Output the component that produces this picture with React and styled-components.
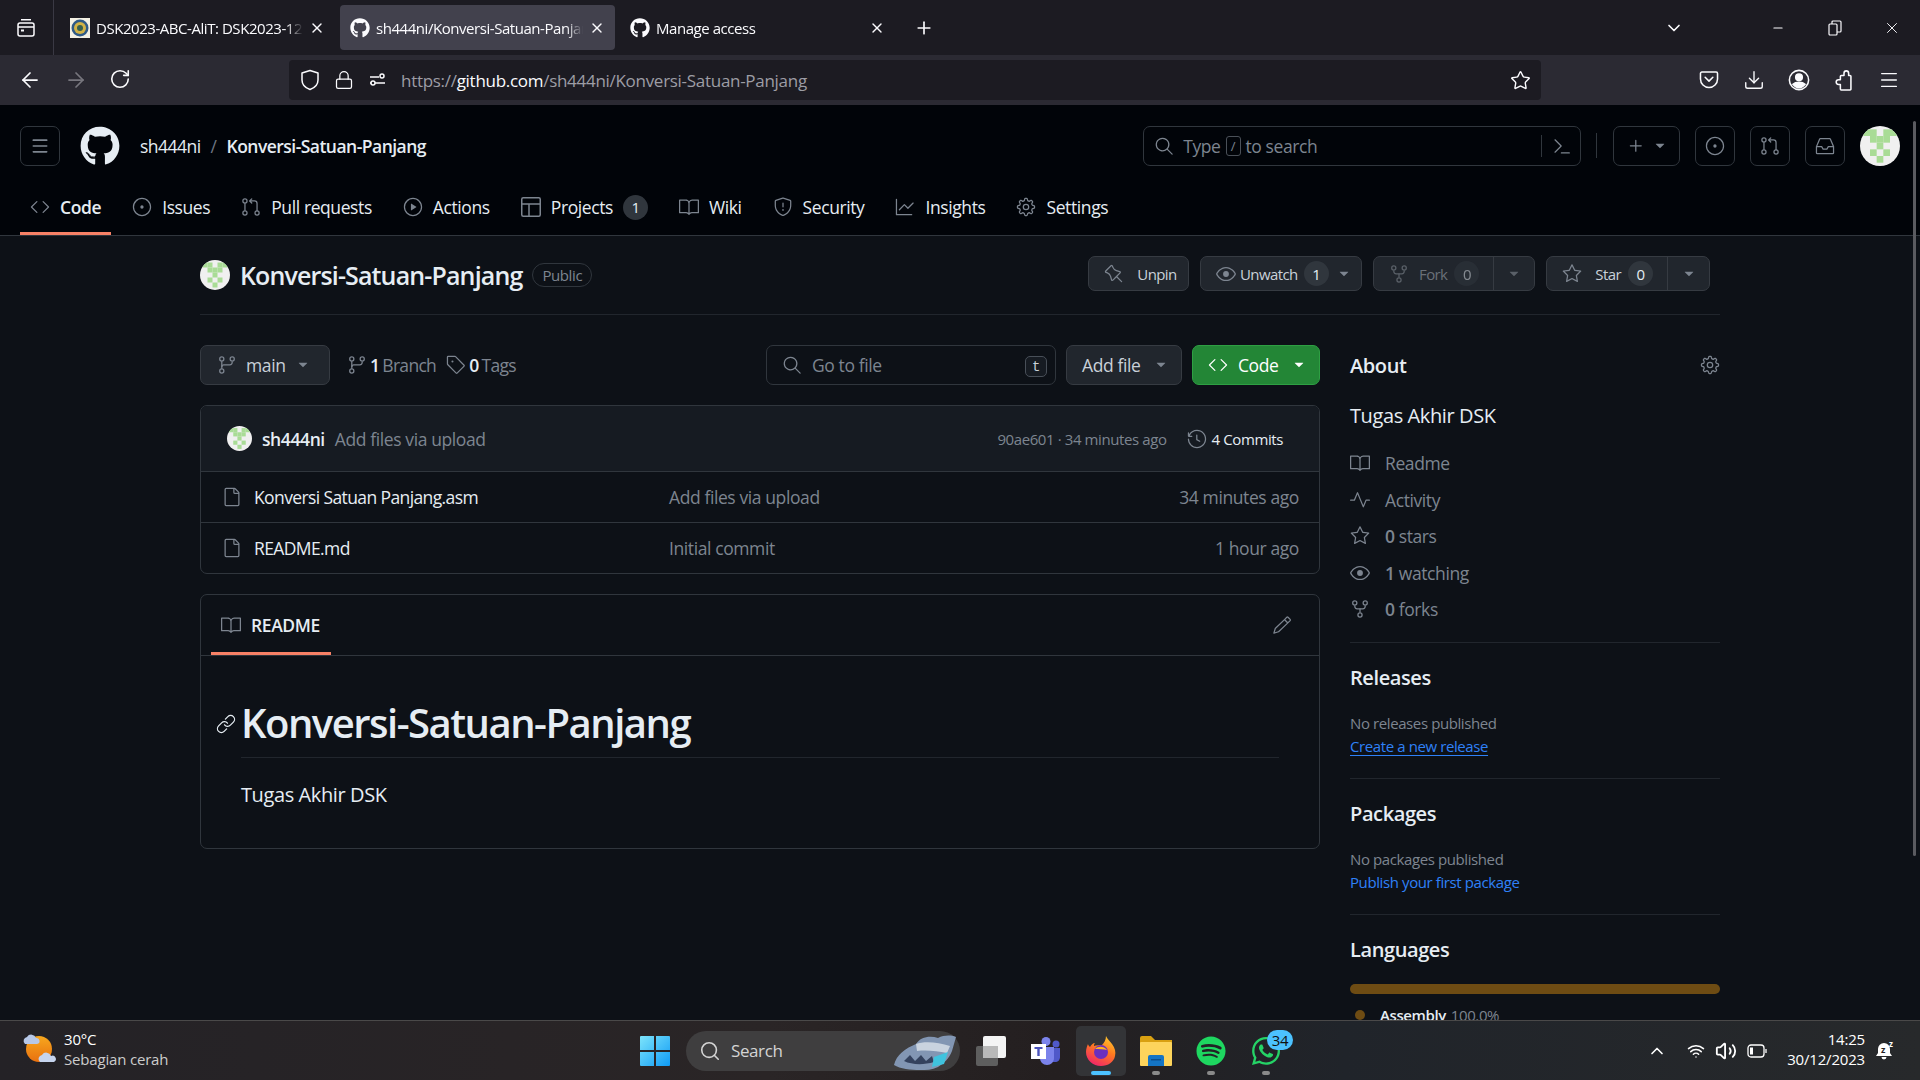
import React from 'react';
import styled, { createGlobalStyle } from 'styled-components';
import {
  GoBook, GoCode, GoCommandPalette, GoEye, GoFile, GoGear, GoGitBranch, GoGitPullRequest, GoGraph,
  GoHistory, GoInbox, GoIssueOpened, GoLink, GoPencil, GoPin, GoPlay, GoPlus, GoPulse,
  GoRepoForked, GoSearch, GoShield, GoStar, GoTag, GoTriangleDown,
} from 'react-icons/go';
import { FaGithub, FaSpotify, FaWhatsapp } from 'react-icons/fa';
import {
  ArrowLeft, ArrowRight, ChevronDown, ChevronUp, Download, Lock, Menu, Minus, Plus, RotateCw,
  Search, Star, Volume2, Wifi, X,
} from 'lucide-react';

const GlobalStyle = createGlobalStyle`
  html, body { margin: 0; padding: 0; background: #0d1117; }
  body { font-family: "Open Sans", "Noto Sans", sans-serif; letter-spacing: -0.025em; }
  * { box-sizing: border-box; }
  svg { flex-shrink: 0; display: block; }
`;

const Page = styled.div`
  position: relative;
  width: 1920px;
  height: 1080px;
  overflow: hidden;
  display: flex;
  flex-direction: column;
  background: #0d1117;
`;

// Browser chrome
const TabBar = styled.div`
  height: 55px;
  background: #1c1b22;
  display: flex;
  align-items: center;
  color: #fbfbfe;
`;

const TabGroups = styled.div`
  width: 54px;
  height: 55px;
  padding-left: 16px;
  margin-right: 6px;
  border-right: 1px solid #3a3944;
  display: flex;
  align-items: center;
`;

const Tab = styled.div`
  width: 275px;
  height: 45px;
  margin-right: 5px;
  border-radius: 4px;
  padding: 0 10px;
  display: flex;
  align-items: center;
  gap: 6px;
  font-size: 15px;
  letter-spacing: -0.03em;
  background: ${(p) => (p.$active ? '#42414d' : 'transparent')};
`;

const TabTitle = styled.span`
  flex: 1;
  min-width: 0;
  white-space: nowrap;
  overflow: hidden;
  mask-image: linear-gradient(to right, #000 92%, transparent);
`;

const Favicon = styled.div`
  width: 20px;
  height: 20px;
  display: flex;
  align-items: center;
  justify-content: center;
`;

const NewTab = styled.div`
  margin-left: 14px;
  width: 20px;
`;

const TabBarRight = styled.div`
  margin-left: auto;
  display: flex;
  align-items: center;
`;

const ListTabs = styled.div`
  margin-right: 65px;
`;

const WinBtn = styled.div`
  width: 57px;
  display: flex;
  justify-content: center;
`;

const Toolbar = styled.div`
  height: 50px;
  background: #2b2a33;
  display: flex;
  align-items: center;
  color: #fbfbfe;
  padding-left: 18px;
`;

const NavBtns = styled.div`
  display: flex;
  gap: 21.5px;
  width: 271px;
`;

const UrlBar = styled.div`
  width: 1252px;
  height: 40px;
  background: #1c1b22;
  border-radius: 4px;
  padding: 0 10px 0 11px;
  display: flex;
  align-items: center;
  gap: 14px;
`;

const UrlText = styled.div`
  flex: 1;
  font-size: 17px;
  color: #9d9da5;
  letter-spacing: -0.017em;
  margin: 1px 0 0 -1px;
  b { font-weight: 400; color: #fbfbfe; }
`;

const ToolIcons = styled.div`
  display: flex;
  align-items: center;
  gap: 23px;
  margin-left: 157px;
  svg { width: 22px; height: 22px; }
`;

// GitHub header
const Header = styled.div`
  height: 131px;
  background: #010409;
  border-bottom: 1px solid #30363d;
  display: flex;
  flex-direction: column;
  color: #e6edf3;
`;

const HeaderTop = styled.div`
  height: 81px;
  padding: 21px 20px 0;
  display: flex;
  align-items: flex-start;
`;

const HeadBtn = styled.div`
  width: ${(p) => p.$w || 40}px;
  height: 40px;
  border: 1px solid #30363d;
  border-radius: 7px;
  color: #7d8590;
  display: flex;
  align-items: center;
  justify-content: center;
  gap: 6px;
  margin-left: ${(p) => p.$ml ?? 15}px;
`;

const Logo = styled.div`
  margin: 0 20px;
  height: 40px;
  color: #e6edf3;
`;

const Crumbs = styled.div`
  height: 40px;
  display: flex;
  align-items: center;
  gap: 10px;
  font-size: 17.5px;
  letter-spacing: -0.03em;
  i { font-style: normal; color: #6e7681; }
  b { font-weight: 600; }
`;

const HeadSearch = styled.div`
  margin-left: auto;
  width: 438px;
  height: 40px;
  border: 1px solid #30363d;
  border-radius: 7px;
  color: #7d8590;
  display: flex;
  align-items: center;
  padding-left: 10px;
  font-size: 17.5px;
  gap: 5px;
`;

const SlashKey = styled.span`
  width: 15px;
  height: 20px;
  border: 1px solid #4a5058;
  border-radius: 3px;
  font-size: 13px;
  display: inline-flex;
  align-items: center;
  justify-content: center;
`;

const SearchEnd = styled.div`
  margin-left: auto;
  width: 39px;
  height: 22px;
  border-left: 1px solid #30363d;
  padding-left: 10px;
  display: flex;
  align-items: center;
`;

const HeadDivider = styled.div`
  width: 1px;
  height: 25px;
  margin: 7px 0 0 15px;
  background: #30363d;
`;

const HeaderAvatar = styled.div`
  margin-left: 15px;
`;

const NavRow = styled.div`
  height: 49px;
  padding: 0 20px;
  display: flex;
  gap: 11px;
  font-size: 17.5px;
`;

const NavItem = styled.div`
  height: 49px;
  padding: 0 10px 4px;
  display: flex;
  align-items: center;
  gap: 10px;
  color: #e6edf3;
  font-weight: ${(p) => (p.$active ? 600 : 400)};
  border-bottom: 3px solid ${(p) => (p.$active ? '#f78166' : 'transparent')};
  svg { color: #7d8590; }
`;

const Counter = styled.span`
  min-width: 25px;
  height: 25px;
  border-radius: 13px;
  background: #30363d;
  color: #e6edf3;
  font-size: 15px;
  font-weight: 500;
  display: flex;
  align-items: center;
  justify-content: center;
  opacity: ${(p) => (p.$dim ? 0.5 : 1)};
`;

// Repository
const Main = styled.div`
  flex: 1;
  min-height: 0;
  overflow: hidden;
  padding: 0 200px;
  color: #e6edf3;
`;

const RepoHead = styled.div`
  height: 79px;
  border-bottom: 1px solid #21262d;
  display: flex;
  align-items: flex-start;
  padding-top: 24px;
`;

const RepoName = styled.div`
  margin-left: 10px;
  font-size: 25px;
  font-weight: 600;
  line-height: 30px;
  letter-spacing: -0.0345em;
`;

const Visibility = styled.span`
  margin: 3px 0 0 10px;
  height: 24px;
  padding: 0 9px;
  border: 1px solid #30363d;
  border-radius: 12px;
  color: #7d8590;
  font-size: 15px;
  font-weight: 500;
  display: flex;
  align-items: center;
`;

const RepoActions = styled.div`
  margin: -4px 10px 0 auto;
  display: flex;
  gap: 11px;
`;

const ActionBtn = styled.div`
  width: ${(p) => p.$w}px;
  height: 35px;
  background: #21262d;
  border: 1px solid #363b42;
  border-radius: 7px;
  display: flex;
  align-items: center;
  font-size: 15px;
  font-weight: 500;
  letter-spacing: -0.04em;
  color: ${(p) => (p.$dim ? '#6a7078' : '#c9d1d9')};
  svg { color: ${(p) => (p.$dim ? '#5a6068' : '#7d8590')}; }
`;

const ActionMain = styled.div`
  flex: 1;
  min-width: 0;
  display: flex;
  align-items: center;
  gap: ${(p) => p.$gap || 7}px;
  padding-left: 15px;
  svg { margin-right: ${(p) => p.$iconGap ?? 3}px; }
`;

const ActionCaret = styled.div`
  width: ${(p) => p.$w}px;
  height: 100%;
  border-left: ${(p) => (p.$split ? '1px solid #363b42' : 'none')};
  display: flex;
  align-items: center;
  justify-content: center;
`;

const Columns = styled.div`
  display: flex;
  gap: 30px;
  padding-top: 30px;
`;

const LeftCol = styled.div`
  width: 1120px;
`;

const BranchRow = styled.div`
  height: 40px;
  display: flex;
  align-items: center;
  font-size: 17.5px;
`;

const BranchBtn = styled.div`
  width: 130px;
  height: 40px;
  background: #21262d;
  border: 1px solid #363b42;
  border-radius: 7px;
  padding-left: 16px;
  display: flex;
  align-items: center;
  gap: 9px;
  font-weight: 500;
  color: #c9d1d9;
  svg { color: #7d8590; }
  span { width: 40px; }
`;

const Meta = styled.div`
  margin-left: ${(p) => p.$ml}px;
  display: flex;
  align-items: center;
  gap: 3px;
  letter-spacing: -0.04em;
  color: #7d8590;
  b { font-weight: 600; color: #e6edf3; }
`;

const GoFileBox = styled.div`
  margin-left: auto;
  width: 290px;
  height: 40px;
  border: 1px solid #30363d;
  border-radius: 7px;
  padding: 0 8px 0 15px;
  display: flex;
  align-items: center;
  gap: 10px;
  color: #7d8590;
`;

const KeyHint = styled.span`
  margin-left: auto;
  margin-top: 3px;
  width: 22px;
  height: 21px;
  border: 1px solid #484f58;
  border-radius: 5px;
  background: #161b22;
  color: #c9d1d9;
  font-size: 14px;
  font-family: "Liberation Mono", monospace;
  display: flex;
  align-items: center;
  justify-content: center;
`;

const RowBtn = styled.div`
  margin-left: 10px;
  width: ${(p) => p.$w}px;
  height: 40px;
  background: ${(p) => (p.$green ? '#238636' : '#21262d')};
  border: 1px solid ${(p) => (p.$green ? '#2ea043' : '#363b42')};
  border-radius: 7px;
  padding-left: 15px;
  color: ${(p) => (p.$green ? '#fff' : '#c9d1d9')};
  font-weight: 500;
  display: flex;
  align-items: center;
  gap: 10px;
  svg:last-child { margin-left: 3px; }
`;

const FileBox = styled.div`
  margin-top: 20px;
  border: 1px solid #30363d;
  border-radius: 7px;
  overflow: hidden;
`;

const CommitHead = styled.div`
  height: 65px;
  background: #161b22;
  padding: 0 36px 0 26px;
  display: flex;
  align-items: center;
  font-size: 17.5px;
`;

const CommitAuthor = styled.b`
  margin-left: 10px;
  font-weight: 600;
`;

const CommitMsg = styled.span`
  margin-left: 10px;
  color: #7d8590;
`;

const CommitMeta = styled.span`
  margin-left: auto;
  font-size: 15px;
  color: #7d8590;
`;

const CommitCount = styled.span`
  margin-left: 20px;
  display: flex;
  align-items: center;
  gap: 5px;
  font-size: 15px;
  font-weight: 500;
  svg { color: #7d8590; }
`;

const FileRow = styled.div`
  height: 51px;
  border-top: 1px solid #30363d;
  padding: 0 20px 0 21px;
  display: flex;
  align-items: center;
  font-size: 17.5px;
  svg { color: #7d8590; }
`;

const FileName = styled.span`
  width: 415px;
  margin-left: 12px;
  letter-spacing: -0.035em;
`;

const FileMsg = styled.span`
  color: #7d8590;
`;

const FileTime = styled.span`
  margin-left: auto;
  color: #7d8590;
`;

const ReadmeBox = styled.div`
  margin-top: 20px;
  height: 255px;
  border: 1px solid #30363d;
  border-radius: 7px;
`;

const ReadmeHead = styled.div`
  height: 61px;
  border-bottom: 1px solid #30363d;
  padding: 0 27px 0 10px;
  display: flex;
  align-items: flex-start;
  justify-content: space-between;
  svg { color: #7d8590; }
`;

const ReadmeTab = styled.div`
  width: 120px;
  height: 60px;
  padding: 3px 0 0 10px;
  border-bottom: 3px solid #f78166;
  display: flex;
  align-items: center;
  gap: 10px;
  font-size: 17.5px;
  font-weight: 600;
`;

const PencilWrap = styled.div`
  margin-top: 20px;
`;

const ReadmeBody = styled.div`
  padding: 30px 40px 0;
`;

const ReadmeTitle = styled.h1`
  position: relative;
  margin: 0;
  height: 72px;
  border-bottom: 1px solid #21262d;
  font-size: 40px;
  font-weight: 600;
  line-height: 74px;
  letter-spacing: -0.0375em;
  svg { position: absolute; left: -25px; top: 28px; color: #e6edf3; }
`;

const ReadmeText = styled.p`
  margin: 22px 0 0;
  font-size: 20px;
  line-height: 30px;
`;

const Side = styled.div`
  width: 370px;
`;

const SideHead = styled.div`
  height: 40px;
  display: flex;
  align-items: center;
  justify-content: space-between;
  font-size: 20px;
  font-weight: 600;
  svg { color: #7d8590; }
`;

const SideDesc = styled.div`
  margin-top: 16px;
  font-size: 20px;
  line-height: 30px;
`;

const SideList = styled.div`
  margin-top: 14px;
  display: flex;
  flex-direction: column;
`;

const SideItem = styled.div`
  height: 36.5px;
  display: flex;
  align-items: center;
  gap: 15px;
  font-size: 17.5px;
  color: #7d8590;
  b { font-weight: 600; color: #7d8590; }
`;

const SideSection = styled.div`
  margin-top: ${(p) => p.$mt || 0}px;
  padding: 20px 0 20px;
  border-top: 1px solid #21262d;
`;

const SideTitle = styled.div`
  font-size: 20px;
  font-weight: 600;
  line-height: 30px;
`;

const SideNote = styled.div`
  margin-top: 19px;
  font-size: 15px;
  line-height: 23px;
  color: #7d8590;
`;

const SideLink = styled.div`
  font-size: 15px;
  line-height: 23px;
  color: #2f81f7;
  span { text-decoration: ${(p) => (p.$underline ? 'underline' : 'none')}; text-underline-offset: 3px; }
`;

const LangBar = styled.div`
  margin-top: 19px;
  height: 10px;
  border-radius: 5px;
  background: #6e4c13;
`;

const LangRow = styled.div`
  margin-top: 11px;
  padding-left: 5px;
  display: flex;
  align-items: center;
  font-size: 15px;
  font-weight: 600;
  color: #e6edf3;
  i { width: 10px; height: 10px; border-radius: 50%; background: #6e4c13; margin-right: 15px; }
  span { font-weight: 400; color: #7d8590; margin-left: 5px; }
`;

const ScrollThumb = styled.div`
  position: absolute;
  right: 4px;
  top: 121px;
  width: 3px;
  height: 735px;
  border-radius: 2px;
  background: #5a5b60;
`;

// Windows taskbar
const Taskbar = styled.div`
  height: 60px;
  border-top: 1px solid #4a4949;
  background: linear-gradient(90deg, #242226, #2a2526 40%, #241f20 55%, #20242a 70%, #27292b);
  display: grid;
  grid-template-columns: 640px auto 1fr;
  align-items: center;
  color: #fff;
`;

const Weather = styled.div`
  display: flex;
  align-items: center;
  padding: 0 0 3px 22px;
  gap: 8px;
  font-size: 15px;
  line-height: 20px;
  letter-spacing: -0.012em;
  span { display: block; }
  em { font-style: normal; color: #ccc; display: block; }
`;

const TaskCenter = styled.div`
  display: flex;
  align-items: center;
  gap: 5px;
`;

const SearchPill = styled.div`
  position: relative;
  width: 274px;
  height: 40px;
  margin: 0 1px 0 11px;
  border-radius: 20px;
  background: #3f3e3f;
  display: flex;
  align-items: center;
  gap: 10px;
  padding-left: 13px;
  font-size: 17px;
  color: #d4d4d4;
`;

const PillArt = styled.div`
  position: absolute;
  right: 2px;
  top: 0;
`;

const TaskApp = styled.div`
  position: relative;
  width: 50px;
  height: 50px;
  border-radius: 5px;
  background: ${(p) => (p.$active ? '#333437' : 'transparent')};
  display: flex;
  align-items: center;
  justify-content: center;
`;

const Indicator = styled.i`
  position: absolute;
  bottom: 1px;
  left: 50%;
  transform: translateX(-50%);
  height: 4px;
  border-radius: 2px;
  width: ${(p) => (p.$active ? 20 : 8)}px;
  background: ${(p) => (p.$active ? '#4cc2ff' : '#8a8a8a')};
`;

const WaBadge = styled.span`
  position: absolute;
  right: -2px;
  top: 4px;
  width: 26px;
  height: 20px;
  border-radius: 10px;
  background: #4cc2ff;
  color: #111;
  font-size: 15px;
  letter-spacing: -0.03em;
  display: flex;
  align-items: center;
  justify-content: center;
`;

const Tray = styled.div`
  display: flex;
  align-items: center;
  justify-content: flex-end;
  padding-right: 25px;
  gap: 10px;
`;

const WifiWrap = styled.div`
  margin-left: 10px;
`;

const Clock = styled.div`
  margin-left: 10px;
  padding-bottom: 3px;
  text-align: right;
  font-size: 15px;
  line-height: 20px;
  letter-spacing: -0.012em;
`;

const Identicon = ({ size }) => {
  const cells = [[0, 0], [1, 0], [3, 0], [4, 0], [1, 1], [2, 1], [3, 1], [2, 2], [1, 3], [3, 3], [2, 4]];
  const id = `ident${size}`;
  return (
    <svg width={size} height={size} viewBox="0 0 120 120">
      <clipPath id={id}><circle cx="60" cy="60" r="60" /></clipPath>
      <g clipPath={`url(#${id})`}>
        <rect width="120" height="120" fill="#f0f0f0" />
        {cells.map(([x, y]) => (
          <rect key={`${x}-${y}`} x={10 + x * 20} y={10 + y * 20} width="20" height="20" fill="#a9dc96" />
        ))}
      </g>
    </svg>
  );
};

const Seal = () => (
  <svg width="20" height="20" viewBox="0 0 20 20">
    <rect width="20" height="20" fill="#f4f1e4" />
    <circle cx="10" cy="10" r="8.5" fill="#2f5a86" />
    <circle cx="10" cy="10" r="6" fill="#d2b346" />
    <circle cx="10" cy="10" r="3" fill="#375f4f" />
  </svg>
);

const ShieldOutline = () => (
  <svg width="20" height="22" viewBox="0 0 20 22" fill="none" stroke="currentColor" strokeWidth="1.5" strokeLinejoin="round">
    <path d="M10 1.5 18 4v7c0 4.5-3 7.8-8 9.5C5 18.8 2 15.5 2 11V4z" />
  </svg>
);

const PocketIcon = () => (
  <svg viewBox="0 0 20 20" fill="none" stroke="currentColor" strokeWidth="1.4" strokeLinecap="round" strokeLinejoin="round">
    <path d="M3.5 2.75h13a1.25 1.25 0 0 1 1.25 1.25v5a7.75 7.75 0 0 1-15.5 0V4a1.25 1.25 0 0 1 1.25-1.25z" />
    <path d="M6.5 7.5 10 11l3.5-3.5" />
  </svg>
);

const AccountIcon = () => (
  <svg viewBox="0 0 20 20" fill="none" stroke="currentColor" strokeWidth="1.4">
    <circle cx="10" cy="10" r="8.75" />
    <circle cx="10" cy="7.5" r="3" fill="currentColor" />
    <path d="M4.5 14c1.4-1.5 3.2-2 5.5-2s4.1.5 5.5 2c-1.3 1.7-3.2 3-5.5 3s-4.2-1.3-5.5-3z" fill="currentColor" />
  </svg>
);

const ExtensionIcon = () => (
  <svg viewBox="0 0 20 20" fill="none" stroke="currentColor" strokeWidth="1.4" strokeLinejoin="round">
    <path d="M7.5 6H10V3.8a2.1 2.1 0 0 1 4.2 0V6h1.3a.8.8 0 0 1 .8.8v11.4a.8.8 0 0 1-.8.8H7.5a.8.8 0 0 1-.8-.8V14H5a2.1 2.1 0 0 1 0-4.2h1.7V6.8a.8.8 0 0 1 .8-.8z" />
  </svg>
);

const PermIcon = () => (
  <svg width="20" height="20" viewBox="0 0 20 20" fill="none" stroke="currentColor" strokeWidth="1.5">
    <circle cx="14" cy="6" r="2" />
    <path d="M2 7h9M2 13h15" />
    <circle cx="5" cy="13" r="2" fill="#1c1b22" />
  </svg>
);

const RestoreIcon = () => (
  <svg width="14" height="16" viewBox="0 0 14 16" fill="none" stroke="currentColor" strokeWidth="1.2">
    <rect x="1" y="4" width="8" height="11" rx="1" />
    <path d="M4 4V2a1 1 0 0 1 1-1h7a1 1 0 0 1 1 1v9a1 1 0 0 1-1 1H9" />
  </svg>
);

const TabsIcon = () => (
  <svg width="20" height="20" viewBox="0 0 20 20" fill="none" stroke="currentColor" strokeWidth="1.5">
    <rect x="2" y="5" width="16" height="13" rx="2" />
    <path d="M5 1.75h10M2 9h16" />
    <rect x="5" y="11.5" width="3" height="2" fill="currentColor" stroke="none" />
  </svg>
);

const TableIcon = ({ size }) => (
  <svg width={size} height={size} viewBox="0 0 20 20" fill="none" stroke="currentColor" strokeWidth="1.5">
    <rect x="0.75" y="0.75" width="18.5" height="18.5" rx="1.5" />
    <path d="M1 7h18M8 7v12" />
  </svg>
);

const WeatherIcon = () => (
  <svg width="34" height="30" viewBox="0 0 34 30">
    <defs>
      <linearGradient id="sunFill" x1="0" y1="0" x2="0" y2="1">
        <stop offset="0" stopColor="#f7a81e" />
        <stop offset="1" stopColor="#e8700f" />
      </linearGradient>
    </defs>
    <circle cx="17" cy="15" r="13" fill="url(#sunFill)" />
    <path d="M3 10a4 4 0 0 1 2-7 5 5 0 0 1 9 1 3 3 0 0 1 1 6z" fill="#b7c8e8" />
    <path d="M18 28a4 4 0 0 1 2-7 5 5 0 0 1 9 1 3 3 0 0 1 3 6z" fill="#c6d4ee" />
  </svg>
);

const StartIcon = () => (
  <svg width="30" height="30" viewBox="0 0 30 30">
    <defs>
      <linearGradient id="startFill" x1="0" y1="0" x2="1" y2="1">
        <stop offset="0" stopColor="#7de4fb" />
        <stop offset="1" stopColor="#0f9bf5" />
      </linearGradient>
    </defs>
    <path d="M1 0h13v14H0V1a1 1 0 0 1 1-1zM16 0h13a1 1 0 0 1 1 1v13H16zM0 16h14v14H1a1 1 0 0 1-1-1zM16 16h14v13a1 1 0 0 1-1 1H16z" fill="url(#startFill)" />
  </svg>
);

const PillPicture = () => (
  <svg width="66" height="40" viewBox="0 0 66 40">
    <path d="M2 34c2-10 12-17 22-21 4-7 14-9 22-6 6-3 13-3 18-1l-4 14c-3 8-8 12-14 16-6 3-12 3-18 3-9 0-20-1-26-5z" fill="#8296b3" />
    <path d="M24 13c8-3 22-2 34 2l-3 7c-10-2-20-3-30-2z" fill="#c9d3df" />
    <path d="M12 30l6-6 5 6 6-6 5 6 6-5 2 6c-10 3-22 3-30-1z" fill="#34425e" />
    <path d="M42 26l14-5-4 12-12 3z" fill="#3fc3de" />
  </svg>
);

const TaskViewIcon = () => (
  <svg width="30" height="30" viewBox="0 0 30 30">
    <rect x="0" y="10" width="22" height="20" rx="2" fill="#5e5e5e" />
    <rect x="7" y="0" width="23" height="22" rx="2" fill="#f4f4f4" />
    <rect x="7" y="10" width="15" height="12" fill="#b9b9b9" />
  </svg>
);

const TeamsIcon = () => (
  <svg width="30" height="28" viewBox="0 0 30 28">
    <circle cx="15" cy="4.5" r="4.5" fill="#7b83eb" />
    <circle cx="25" cy="7" r="3.5" fill="#5059c9" />
    <path d="M21 11h8v9c0 3-2 5-5 5h-3z" fill="#5059c9" />
    <path d="M9 10h14v11c0 4-3 7-7 7s-7-3-7-7z" fill="#7b83eb" />
    <rect x="0" y="7" width="15" height="15" fill="#fff" />
    <path d="M3.5 10h8v2H8.7v7H6.3v-7H3.5z" fill="#4b53bc" />
  </svg>
);

const FirefoxIcon = () => (
  <svg width="30" height="30" viewBox="0 0 30 30">
    <defs>
      <linearGradient id="foxFill" x1="0.8" y1="0" x2="0.3" y2="1">
        <stop offset="0" stopColor="#ffcb2e" />
        <stop offset="0.45" stopColor="#ff7a1f" />
        <stop offset="1" stopColor="#f0246a" />
      </linearGradient>
    </defs>
    <path d="M20 0c1 3 4 5 6 8 3 4 4 8 3 12-1 6-7 10-14 10C7 30 0 24 0 16c0-3 1-6 2-8 0 1 1 2 2 3 1-2 3-4 5-4-1 1-1 2-1 3 2-1 6-1 8-1 2-2 4-5 4-9z" fill="url(#foxFill)" />
    <circle cx="15" cy="16" r="7" fill="#6b2fbe" />
    <path d="M9 13c3-3 9-3 12 1-3-1-8-1-12-1z" fill="#ffb321" />
  </svg>
);

const FolderIcon = () => (
  <svg width="32" height="30" viewBox="0 0 32 30">
    <path d="M0 2a2 2 0 0 1 2-2h9l4 4h17v4H0z" fill="#d9a011" />
    <rect y="6" width="32" height="24" rx="1" fill="#fdd45c" />
    <path d="M8 30v-9a2 2 0 0 1 2-2h12a2 2 0 0 1 2 2v9z" fill="#1474c4" />
    <rect x="11" y="23" width="10" height="1.5" fill="#0a4f8e" />
  </svg>
);

const BatteryIcon = () => (
  <svg width="20" height="14" viewBox="0 0 20 14" fill="none" stroke="#fff" strokeWidth="1.3">
    <rect x="1" y="1" width="16" height="12" rx="3" />
    <rect x="3" y="3.5" width="3" height="7" fill="#fff" stroke="none" />
    <path d="M19 5v4" />
  </svg>
);

const BellIcon = () => (
  <svg width="20" height="22" viewBox="0 0 20 22">
    <path d="M9 3a6 6 0 0 1 6 6v4l2 3H1l2-3V9a6 6 0 0 1 6-6zM6.5 17h5a2.5 2.5 0 0 1-5 0z" fill="#fff" />
    <text x="6" y="13" fontSize="9" fontWeight="700" fill="#252323">z</text>
    <text x="14" y="7" fontSize="8" fontWeight="700" fill="#fff">z</text>
  </svg>
);

const navItems = [
  ['Code', GoCode], ['Issues', GoIssueOpened], ['Pull requests', GoGitPullRequest], ['Actions', GoPlay],
  ['Projects', TableIcon, 1], ['Wiki', GoBook], ['Security', GoShield], ['Insights', GoGraph], ['Settings', GoGear],
];

const aboutItems = [
  [GoBook, '', 'Readme'], [GoPulse, '', 'Activity'], [GoStar, '0', ' stars'], [GoEye, '1', ' watching'], [GoRepoForked, '0', ' forks'],
];

const files = [
  ['Konversi Satuan Panjang.asm', 'Add files via upload', '34 minutes ago'],
  ['README.md', 'Initial commit', '1 hour ago'],
];

const Caret = ({ color }) => <GoTriangleDown size={16} color={color} />;

export default function App() {
  return (
    <Page>
      <GlobalStyle />
      <TabBar>
        <TabGroups><TabsIcon /></TabGroups>
        <Tab>
          <Favicon><Seal /></Favicon>
          <TabTitle>DSK2023-ABC-AliT: DSK2023-12</TabTitle>
          <X size={16} />
        </Tab>
        <Tab $active>
          <Favicon><FaGithub size={20} /></Favicon>
          <TabTitle>sh444ni/Konversi-Satuan-Panjang</TabTitle>
          <X size={16} />
        </Tab>
        <Tab>
          <Favicon><FaGithub size={20} /></Favicon>
          <TabTitle>Manage access</TabTitle>
          <X size={16} />
        </Tab>
        <NewTab><Plus size={20} /></NewTab>
        <TabBarRight>
          <ListTabs><ChevronDown size={20} /></ListTabs>
          <WinBtn><Minus size={14} /></WinBtn>
          <WinBtn><RestoreIcon /></WinBtn>
          <WinBtn><X size={18} strokeWidth={1.25} /></WinBtn>
        </TabBarRight>
      </TabBar>
      <Toolbar>
        <NavBtns>
          <ArrowLeft size={24} strokeWidth={1.75} />
          <ArrowRight size={24} strokeWidth={1.75} color="#77767e" />
          <RotateCw size={22} strokeWidth={1.75} />
        </NavBtns>
        <UrlBar>
          <ShieldOutline />
          <Lock size={20} strokeWidth={1.5} />
          <PermIcon />
          <UrlText>https://<b>github.com</b>/sh444ni/Konversi-Satuan-Panjang</UrlText>
          <Star size={21} strokeWidth={1.6} />
        </UrlBar>
        <ToolIcons>
          <PocketIcon />
          <Download strokeWidth={1.5} />
          <AccountIcon />
          <ExtensionIcon />
          <Menu strokeWidth={1.5} />
        </ToolIcons>
      </Toolbar>
      <Header>
        <HeaderTop>
          <HeadBtn $ml={0}><Menu size={20} /></HeadBtn>
          <Logo><FaGithub size={40} /></Logo>
          <Crumbs>
            <span>sh444ni</span><i>/</i><b>Konversi-Satuan-Panjang</b>
          </Crumbs>
          <HeadSearch>
            <GoSearch size={20} />
            <span>&nbsp;Type</span><SlashKey>/</SlashKey><span>to search</span>
            <SearchEnd><GoCommandPalette size={20} /></SearchEnd>
          </HeadSearch>
          <HeadDivider />
          <HeadBtn $w={67} $ml={16}><GoPlus size={20} /><Caret /></HeadBtn>
          <HeadBtn><GoIssueOpened size={20} /></HeadBtn>
          <HeadBtn><GoGitPullRequest size={20} /></HeadBtn>
          <HeadBtn><GoInbox size={20} /></HeadBtn>
          <HeaderAvatar><Identicon size={40} /></HeaderAvatar>
        </HeaderTop>
        <NavRow>
          {navItems.map(([label, Icon, count]) => (
            <NavItem key={label} $active={label === 'Code'}>
              <Icon size={20} />
              <span>{label}</span>
              {count && <Counter>{count}</Counter>}
            </NavItem>
          ))}
        </NavRow>
      </Header>
      <Main>
        <RepoHead>
          <Identicon size={30} />
          <RepoName>Konversi-Satuan-Panjang</RepoName>
          <Visibility>Public</Visibility>
          <RepoActions>
            <ActionBtn $w={101}>
              <ActionMain><GoPin size={20} /><span>&nbsp;Unpin</span></ActionMain>
            </ActionBtn>
            <ActionBtn $w={162}>
              <ActionMain $gap={6} $iconGap={-2}>
                <GoEye size={20} /><span>Unwatch</span><Counter>1</Counter>
              </ActionMain>
              <ActionCaret $w={34}><Caret /></ActionCaret>
            </ActionBtn>
            <ActionBtn $w={162} $dim>
              <ActionMain>
                <GoRepoForked size={20} /><span>Fork</span><Counter $dim>0</Counter>
              </ActionMain>
              <ActionCaret $w={41} $split><Caret /></ActionCaret>
            </ActionBtn>
            <ActionBtn $w={164}>
              <ActionMain>
                <GoStar size={20} /><span>&nbsp;Star</span><Counter>0</Counter>
              </ActionMain>
              <ActionCaret $w={42} $split><Caret /></ActionCaret>
            </ActionBtn>
          </RepoActions>
        </RepoHead>
        <Columns>
          <LeftCol>
            <BranchRow>
              <BranchBtn><GoGitBranch size={20} /><span>main</span><Caret color="#7d8590" /></BranchBtn>
              <Meta $ml={17}><GoGitBranch size={20} /><b>1</b>Branch</Meta>
              <Meta $ml={10}><GoTag size={20} /><b>0</b>Tags</Meta>
              <GoFileBox>
                <GoSearch size={20} /><span>Go to file</span><KeyHint>t</KeyHint>
              </GoFileBox>
              <RowBtn $w={116}>Add file<Caret color="#7d8590" /></RowBtn>
              <RowBtn $w={128} $green><GoCode size={20} />Code<Caret color="#fff" /></RowBtn>
            </BranchRow>
            <FileBox>
              <CommitHead>
                <Identicon size={25} />
                <CommitAuthor>sh444ni</CommitAuthor>
                <CommitMsg>Add files via upload</CommitMsg>
                <CommitMeta>90ae601 · 34 minutes ago</CommitMeta>
                <CommitCount><GoHistory size={20} />4 Commits</CommitCount>
              </CommitHead>
              {files.map(([name, msg, time]) => (
                <FileRow key={name}>
                  <GoFile size={20} />
                  <FileName>{name}</FileName>
                  <FileMsg>{msg}</FileMsg>
                  <FileTime>{time}</FileTime>
                </FileRow>
              ))}
            </FileBox>
            <ReadmeBox>
              <ReadmeHead>
                <ReadmeTab><GoBook size={20} />README</ReadmeTab>
                <PencilWrap><GoPencil size={20} /></PencilWrap>
              </ReadmeHead>
              <ReadmeBody>
                <ReadmeTitle><GoLink size={20} />Konversi-Satuan-Panjang</ReadmeTitle>
                <ReadmeText>Tugas Akhir DSK</ReadmeText>
              </ReadmeBody>
            </ReadmeBox>
          </LeftCol>
          <Side>
            <SideHead>About<GoGear size={20} /></SideHead>
            <SideDesc>Tugas Akhir DSK</SideDesc>
            <SideList>
              {aboutItems.map(([Icon, num, label]) => (
                <SideItem key={label}>
                  <Icon size={20} />
                  <span><b>{num}</b>{label}</span>
                </SideItem>
              ))}
            </SideList>
            <SideSection $mt={14}>
              <SideTitle>Releases</SideTitle>
              <SideNote>No releases published</SideNote>
              <SideLink $underline><span>Create a new release</span></SideLink>
            </SideSection>
            <SideSection>
              <SideTitle>Packages</SideTitle>
              <SideNote>No packages published</SideNote>
              <SideLink>Publish your first package</SideLink>
            </SideSection>
            <SideSection>
              <SideTitle>Languages</SideTitle>
              <LangBar />
              <LangRow><i />Assembly<span>100.0%</span></LangRow>
            </SideSection>
          </Side>
        </Columns>
      </Main>
      <ScrollThumb />
      <Taskbar>
        <Weather>
          <WeatherIcon />
          <div><span>30°C</span><em>Sebagian cerah</em></div>
        </Weather>
        <TaskCenter>
          <StartIcon />
          <SearchPill>
            <Search size={22} strokeWidth={1.75} />
            Search
            <PillArt><PillPicture /></PillArt>
          </SearchPill>
          <TaskApp><TaskViewIcon /></TaskApp>
          <TaskApp><TeamsIcon /></TaskApp>
          <TaskApp $active><FirefoxIcon /><Indicator $active /></TaskApp>
          <TaskApp><FolderIcon /><Indicator /></TaskApp>
          <TaskApp><FaSpotify size={30} color="#1ed760" /><Indicator /></TaskApp>
          <TaskApp><FaWhatsapp size={32} color="#25d366" /><WaBadge>34</WaBadge><Indicator /></TaskApp>
        </TaskCenter>
        <Tray>
          <ChevronUp size={20} />
          <WifiWrap><Wifi size={18} /></WifiWrap>
          <Volume2 size={22} />
          <BatteryIcon />
          <Clock>14:25<br />30/12/2023</Clock>
          <BellIcon />
        </Tray>
      </Taskbar>
    </Page>
  );
}
